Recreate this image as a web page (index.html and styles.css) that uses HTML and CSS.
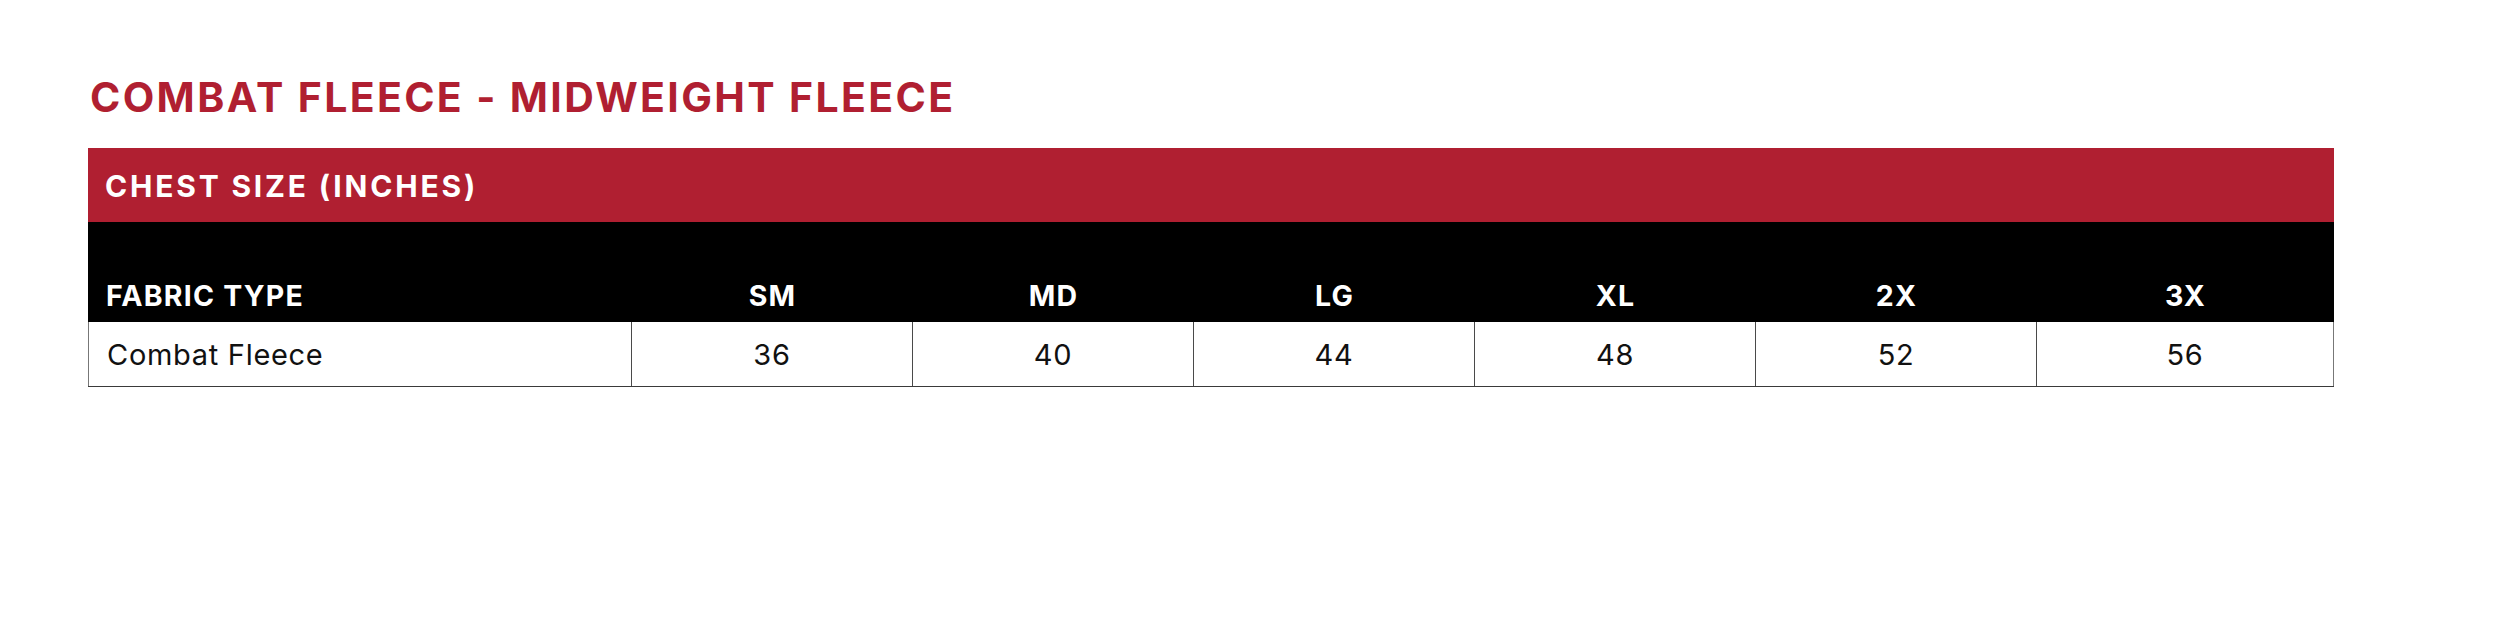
FILE: index.html
```html
<!DOCTYPE html>
<html lang="en">
<head>
<meta charset="utf-8">
<title>Combat Fleece - Midweight Fleece</title>
<link rel="stylesheet" href="styles.css">
</head>
<body>
<div class="sheet">
  <h1 class="title">COMBAT FLEECE - MIDWEIGHT FLEECE</h1>
  <div class="chart">
    <div class="band">CHEST SIZE (INCHES)</div>
    <div class="grid head">
      <div class="cell first">FABRIC TYPE</div>
      <div class="cell">SM</div>
      <div class="cell">MD</div>
      <div class="cell">LG</div>
      <div class="cell">XL</div>
      <div class="cell">2X</div>
      <div class="cell">3X</div>
    </div>
    <div class="grid row">
      <div class="cell first">Combat Fleece</div>
      <div class="cell">36</div>
      <div class="cell">40</div>
      <div class="cell">44</div>
      <div class="cell">48</div>
      <div class="cell">52</div>
      <div class="cell">56</div>
    </div>
  </div>
</div>
</body>
</html>
```
FILE: styles.css
```css
html, body {
  margin: 0;
  padding: 0;
  background: #ffffff;
}

body {
  font-family: Inter, "Open Sans", "Liberation Sans", sans-serif;
}

.sheet {
  padding: 77px 0 0 88px;
  width: 2246px;
}

.title {
  margin: 0 0 30px 2px;
  font-size: 41px;
  line-height: 41px;
  font-weight: 700;
  color: #b01f31;
  letter-spacing: 2.35px;
}

.band {
  height: 74px;
  display: flex;
  align-items: center;
  padding: 2px 0 0 17px;
  box-sizing: border-box;
  background: #b01f31;
  color: #ffffff;
  font-size: 30px;
  font-weight: 700;
  letter-spacing: 2.8px;
}

.grid {
  display: grid;
  grid-template-columns: 544px 281px 281px 281px 281px 281px 297px;
}

.head {
  height: 100px;
  background: #000000;
  color: #ffffff;
  font-size: 28.5px;
  line-height: 28.5px;
  font-weight: 700;
  letter-spacing: 1.2px;
}

.head .cell {
  align-self: end;
  padding-bottom: 12px;
  text-align: center;
}

.head .cell.first {
  text-align: left;
  padding-left: 18px;
}

.row {
  height: 65px;
  box-sizing: border-box;
  border-bottom: 1px solid #3a3a3a;
  font-size: 29px;
  font-weight: 400;
  color: #111111;
  letter-spacing: 0.7px;
}

.row .cell {
  display: flex;
  align-items: center;
  justify-content: center;
  border-right: 1px solid #4a4a4a;
}

.row .cell.first {
  justify-content: flex-start;
  padding-left: 18px;
  border-left: 1px solid #777777;
}

.row .cell:last-child {
  border-right-color: #777777;
}
```
